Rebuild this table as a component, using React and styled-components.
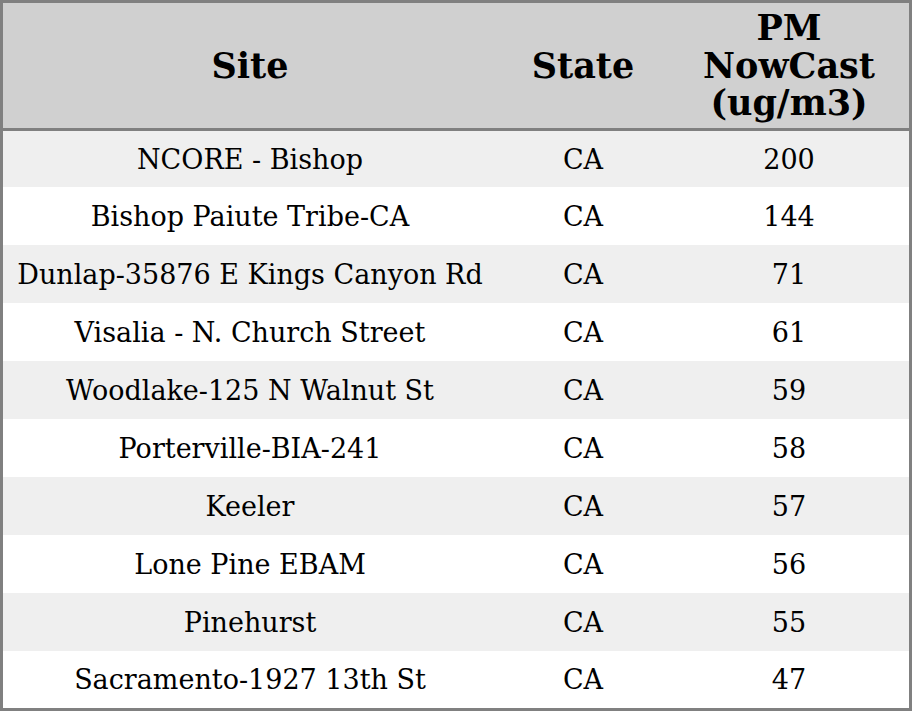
import React from "react";
import styled, { createGlobalStyle } from "styled-components";

const GlobalStyle = createGlobalStyle`
  html, body {
    margin: 0;
    padding: 0;
    background: #ffffff;
  }
`;

const Table = styled.div`
  width: 912px;
  height: 711px;
  box-sizing: border-box;
  border: 3px solid #808080;
  display: grid;
  grid-template-columns: 494px 172px 1fr;
  grid-template-rows: 128px 56px repeat(8, 58px) 1fr;
  font-family: "DejaVu Serif", serif;
  color: #000000;
`;

const HeadCell = styled.div`
  display: flex;
  align-items: center;
  justify-content: center;
  text-align: center;
  background: #d0d0d0;
  border-bottom: 3px solid #808080;
  font-size: 35px;
  font-weight: 700;
  line-height: 37.5px;
`;

const Cell = styled.div`
  display: flex;
  align-items: center;
  justify-content: center;
  text-align: center;
  font-size: 27px;
  background: ${(props) => (props.$shaded ? "#efefef" : "#ffffff")};
`;

const rows = [
  ["NCORE - Bishop", "CA", "200"],
  ["Bishop Paiute Tribe-CA", "CA", "144"],
  ["Dunlap-35876 E Kings Canyon Rd", "CA", "71"],
  ["Visalia - N. Church Street", "CA", "61"],
  ["Woodlake-125 N Walnut St", "CA", "59"],
  ["Porterville-BIA-241", "CA", "58"],
  ["Keeler", "CA", "57"],
  ["Lone Pine EBAM", "CA", "56"],
  ["Pinehurst", "CA", "55"],
  ["Sacramento-1927 13th St", "CA", "47"],
];

const App = () => {
  return (
    <>
      <GlobalStyle />
      <Table>
        <HeadCell>Site</HeadCell>
        <HeadCell>State</HeadCell>
        <HeadCell>
          PM
          <br />
          NowCast
          <br />
          (ug/m3)
        </HeadCell>
        {rows.map((row, i) =>
          row.map((value, j) => (
            <Cell key={`${i}-${j}`} $shaded={i % 2 === 0}>
              {value}
            </Cell>
          ))
        )}
      </Table>
    </>
  );
};

export default App;
